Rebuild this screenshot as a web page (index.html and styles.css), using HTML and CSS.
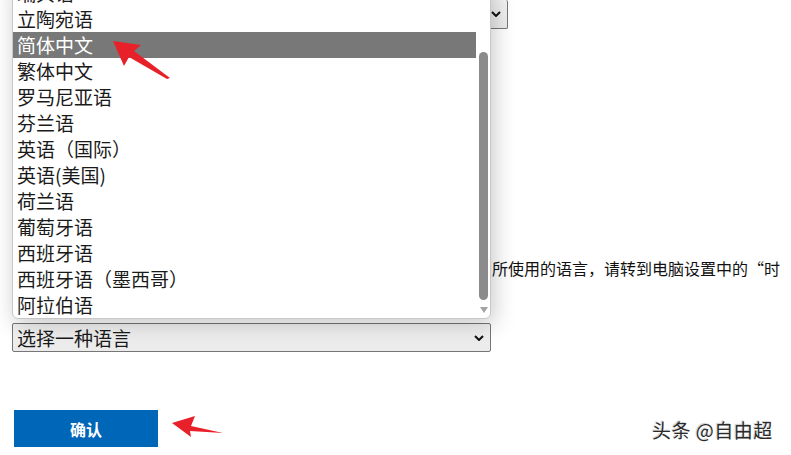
FILE: index.html
```html
<!DOCTYPE html>
<html lang="zh-CN">
<head>
    <meta charset="UTF-8">
    <meta name="viewport" content="width=device-width, initial-scale=1.0">
    <title>选择语言</title>
    <link rel="stylesheet" href="styles.css">
</head>
<body>
    <div class="page">
        <!-- Region select (top, mostly covered by the open list) -->
        <div class="select top-select">
            <span class="select-text">中国</span>
            <svg class="chevron" viewBox="0 0 10 6" width="10" height="6"><path d="M1 1 L5 5 L9 1" /></svg>
        </div>

        <p class="note">若要更改电脑显示语言（即设置、文件资源管理器等各项系统功能）所使用的语言，请转到电脑设置中的“时间和语言”。</p>

        <!-- Language select -->
        <div class="select lang-select">
            <span class="select-text">选择一种语言</span>
            <svg class="chevron" viewBox="0 0 10 6" width="10" height="6"><path d="M1 1 L5 5 L9 1" /></svg>
        </div>

        <button class="btn">确认</button>

        <!-- Open dropdown list -->
        <div class="dropdown">
            <ul class="options">
                <li>瑞典语</li>
                <li>立陶宛语</li>
                <li class="selected">简体中文</li>
                <li>繁体中文</li>
                <li>罗马尼亚语</li>
                <li>芬兰语</li>
                <li>英语（国际）</li>
                <li>英语(美国)</li>
                <li>荷兰语</li>
                <li>葡萄牙语</li>
                <li>西班牙语</li>
                <li>西班牙语（墨西哥）</li>
                <li>阿拉伯语</li>
            </ul>
            <div class="scrollbar">
                <div class="thumb"></div>
                <div class="arrow-down"></div>
            </div>
        </div>

        <!-- Annotation arrows -->
        <svg class="annotations" width="791" height="455" viewBox="0 0 791 455">
            <polygon points="113,41 141,45 134,51 170,78 167,79 129,57 124,66" />
            <polygon points="172,423 195,416 191,426 223,433 190,431 191,437" />
        </svg>

        <div class="watermark">头条 @自由超</div>
    </div>
</body>
</html>
```

FILE: styles.css
```css
/* Global */
* {
    box-sizing: border-box;
    margin: 0;
    padding: 0;
}
body {
    width: 791px;
    height: 455px;
    overflow: hidden;
    background: #fff;
    font-family: "Noto Sans CJK SC", "Microsoft YaHei", sans-serif;
    color: #1a1a1a;
}
.page {
    position: relative;
    height: 455px;
    padding-left: 12px;
}

/* Selects */
.select {
    display: flex;
    align-items: center;
    justify-content: space-between;
    border: 1px solid #767676;
    border-radius: 2px;
    background: linear-gradient(#f4f4f4, #ebebeb);
    padding: 0 6px 0 4px;
}
.select-text {
    font-size: 19px;
    line-height: 26px;
}
.chevron {
    fill: none;
    stroke: #111;
    stroke-width: 2;
}
.top-select {
    width: 496px;
    height: 29px;
    border-top: none;
}
.lang-select {
    width: 479px;
    height: 29px;
    margin-top: 19px;
}

/* Note text */
.note {
    margin-top: 227px;
    width: 776px;
    font-size: 16px;
    line-height: 24px;
    color: #111;
}

/* Button */
.btn {
    display: block;
    margin: 58px 0 0 2px;
    width: 144px;
    height: 37px;
    border: none;
    background: #0067b8;
    color: #fff;
    font-family: inherit;
    font-size: 16px;
    font-weight: bold;
}

/* Dropdown list */
.dropdown {
    position: absolute;
    top: -21px;
    left: 12px;
    width: 479px;
    height: 340px;
    display: flex;
    background: #fff;
    border: 1px solid #c8c8c8;
    border-radius: 0 0 6px 6px;
    box-shadow: 3px 6px 22px rgba(0, 0, 0, 0.22);
}
.options {
    list-style: none;
    width: 463px;
}
.options li {
    height: 26px;
    line-height: 26px;
    padding-left: 4px;
    font-size: 19px;
    color: #1a1a1a;
}
.options li.selected {
    background: #787878;
    color: #fff;
}
.scrollbar {
    flex: 1;
    display: flex;
    flex-direction: column;
    align-items: center;
    padding-left: 1px;
}
.thumb {
    margin-top: 72px;
    width: 9px;
    height: 248px;
    border-radius: 5px;
    background: #8b8b8b;
}
.arrow-down {
    margin-top: 7px;
    width: 0;
    height: 0;
    border-left: 4px solid transparent;
    border-right: 4px solid transparent;
    border-top: 6px solid #a3a3a3;
}

/* Annotation overlay */
.annotations {
    position: absolute;
    top: 0;
    left: 0;
    pointer-events: none;
}
.annotations polygon {
    fill: #e8202a;
}

/* Watermark */
.watermark {
    position: absolute;
    left: 652px;
    top: 417px;
    font-size: 19px;
    line-height: 26px;
    letter-spacing: 0.5px;
    color: #2a2a2a;
    text-shadow: 1px 1px 1px #fff, -1px -1px 1px #ccc;
}
```
